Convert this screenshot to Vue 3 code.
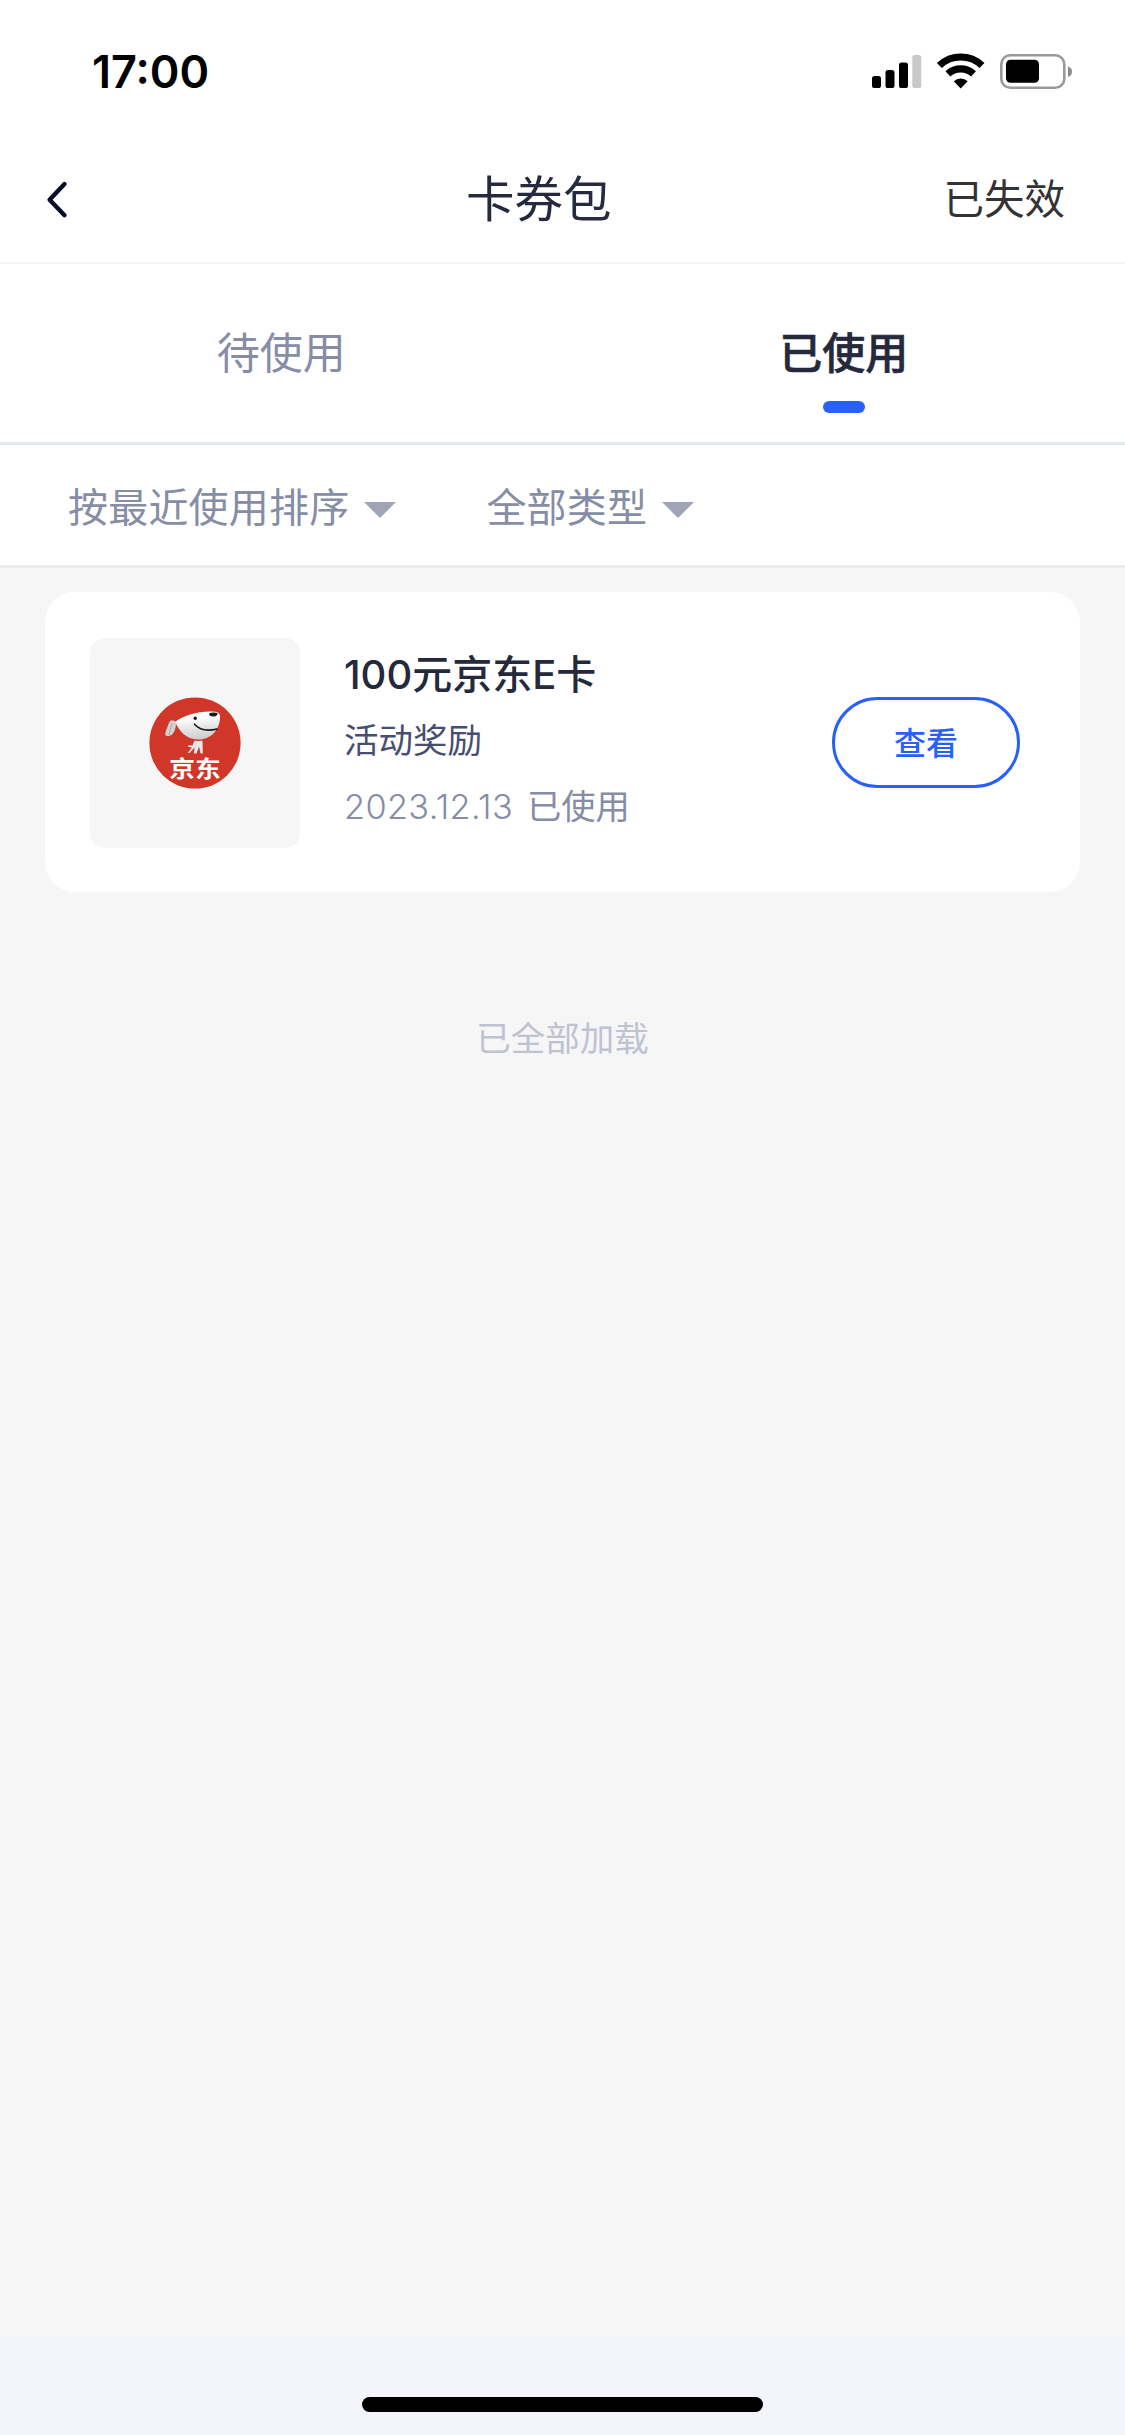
<script setup>
const tabs = [
  { label: '待使用', active: false },
  { label: '已使用', active: true },
]
const filters = ['按最近使用排序', '全部类型']
</script>

<template>
  <div class="page">
    <div class="status">
      <span class="time">17:00</span>
      <svg class="status-icons" width="206" height="40" viewBox="0 0 206 40">
        <rect x="0" y="22" width="9" height="12" rx="2.6" />
        <rect x="13.500" y="16" width="9" height="18" rx="2.600" />
        <rect x="27" y="8.500" width="9" height="25.500" rx="2.600" />
        <rect x="40.300" y="1" width="9" height="33" rx="2.600" fill="#c9c9c9" />
        <g fill="none" stroke="#000" stroke-width="7.200">
          <path d="M67.400 11.500A31 31 0 0 1 110 11.500" />
          <path d="M75.900 19.800A19 19 0 0 1 101.500 19.800" />
        </g>
        <path d="M81.700 27.200a10.500 10.500 0 0 1 14 0L88.700 34.400z" />
        <rect x="129.300" y="1.300" width="63" height="32.400" rx="9" fill="none" stroke="#999" stroke-width="2.600" />
        <rect x="134" y="5.800" width="33" height="23" rx="4.500" />
        <path d="M196 12.300q4 1.500 4 5.400t-4 5.400z" fill="#8c8c8c" />
      </svg>
    </div>

    <header class="nav">
      <svg class="back" width="24" height="40" viewBox="0 0 24 40">
        <path d="M19.500 4L4.600 19.700L19.500 35.200" fill="none" stroke="#0a0b2b" stroke-width="4.400" stroke-linecap="round" stroke-linejoin="round" />
      </svg>
      <h1 class="title">卡券包</h1>
      <span class="expired">已失效</span>
    </header>

    <nav class="tabs">
      <div v-for="t in tabs" :key="t.label" class="tab" :class="{ active: t.active }">
        <span>{{ t.label }}</span>
        <i class="mark"></i>
      </div>
    </nav>

    <div class="filters">
      <div v-for="f in filters" :key="f" class="filter">
        <span>{{ f }}</span>
        <svg width="32" height="16" viewBox="0 0 32 16"><path d="M0 0H32L16 16z" fill="#9fa4b6" /></svg>
      </div>
    </div>

    <main class="list">
      <article class="card">
        <div class="thumb">
          <svg width="92" height="92" viewBox="0 0 92 92">
            <defs>
              <linearGradient id="head" x1="0" y1="0" x2="0.200" y2="1">
                <stop offset="0.350" stop-color="#fafafa" />
                <stop offset="1" stop-color="#cfcfcf" />
              </linearGradient>
            </defs>
            <circle cx="46" cy="46" r="45.600" fill="#d13729" />
            <path d="M27 25.500C24.500 22.500 21.500 22.500 20.200 25.500C18.500 29.500 16.800 33.500 16.200 37C16 39.500 21 39.800 23.300 37.300C26 34 26.800 31 27 25.500z" fill="#d2d2d2" />
            <path d="M23.500 26C21.500 30 20.500 34 20.300 38" fill="none" stroke="#aaa" stroke-width="1" />
            <path d="M26 25C35 18 51 13.500 66 14.800C70.500 15.200 71.500 18 71 22C70 32 63 42.500 49 42.500C37 42.500 30.500 34 26 25z" fill="url(#head)" />
            <path d="M60 16.500q4-1.800 8.500-.4q.3 3-3 3.300q-5.500.3-5.500-2.900z" fill="#191919" />
            <circle cx="46.200" cy="21.300" r="1.700" fill="#191919" />
            <path d="M45.500 27.200C51 33.500 60 34 68 32" fill="none" stroke="#191919" stroke-width="1.600" stroke-linecap="round" />
            <path d="M45.500 43.500C49 44.300 51.500 44 53.500 43.500L53.800 56.500H51.600L50 49.500L47.500 56.500H45L45.600 50.500L40.500 56H38.800L42.800 50.500L38.700 49.600L39.500 48.300L43.500 48.500z" fill="#e8e8e8" />
            <text class="logo-text" transform="translate(20.300 79.600) scale(1 0.860)">京东</text>
          </svg>
        </div>
        <div class="info">
          <div class="name">100元京东E卡</div>
          <div class="source">活动奖励</div>
          <div class="date"><span class="num">2023.12.13</span><span>已使用</span></div>
        </div>
        <button class="view">查看</button>
      </article>
      <p class="end">已全部加载</p>
    </main>

    <footer class="bottom"><div class="home"></div></footer>
  </div>
</template>

<style>
body {
  margin: 0;
}
</style>

<style scoped>
.page {
  width: 1125px;
  height: 2435px;
  display: flex;
  flex-direction: column;
  background: #fff;
  overflow: hidden;
  font-family: Inter, "Noto Sans CJK SC", sans-serif;
}
.status {
  height: 144px;
  flex: none;
  box-sizing: border-box;
  display: flex;
  justify-content: space-between;
  align-items: center;
  padding: 0 47px 0 92px;
}
.time {
  font-size: 45px;
  font-weight: 600;
  line-height: 56px;
  color: #000;
}
.status-icons {
  margin-top: 4px;
  overflow: visible;
}
.nav {
  flex: none;
  height: 120px;
  box-sizing: border-box;
  border-bottom: 2px solid #f4f4f4;
  display: flex;
  align-items: center;
  padding: 0 60px 6px 45px;
}
.back {
  margin-top: -1px;
}
.title {
  margin: 0 0 0 397px;
  font-size: 48.500px;
  line-height: 64px;
  font-weight: 400;
  color: #252a3f;
}
.expired {
  margin-left: auto;
  font-size: 40.500px;
  line-height: 64px;
  color: #333;
}
.tabs {
  flex: none;
  height: 181px;
  box-sizing: border-box;
  border-bottom: 3px solid #e3e7f3;
  display: flex;
}
.tab {
  flex: 1;
  display: flex;
  flex-direction: column;
  align-items: center;
  padding-top: 59px;
  font-size: 43px;
  line-height: 60px;
  color: #868da5;
}
.tab.active {
  color: #25293c;
  font-weight: 500;
  -webkit-text-stroke: 0.600px #25293c;
}
.mark {
  width: 42px;
  height: 12px;
  margin-top: 18px;
  border-radius: 6px;
}
.active .mark {
  background: #2860f8;
}
.filters {
  flex: none;
  height: 123px;
  box-sizing: border-box;
  border-bottom: 3px solid #ebebeb;
  display: flex;
  align-items: center;
  gap: 90px;
  padding: 5px 0 0 68px;
}
.filter {
  display: flex;
  align-items: center;
  gap: 15px;
  font-size: 40px;
  letter-spacing: 0.200px;
  line-height: 60px;
  color: #868da5;
}
.filter svg {
  margin-top: 4px;
}
.list {
  flex: 1;
  background: #f6f6f6;
  padding: 24px 45px 0;
}
.card {
  height: 300px;
  box-sizing: border-box;
  background: #fff;
  border-radius: 30px;
  display: flex;
  align-items: center;
  padding: 1px 60px 0 45px;
}
.thumb {
  width: 210px;
  height: 210px;
  border-radius: 15px;
  background: #f6f6f6;
  display: flex;
  align-items: center;
  justify-content: center;
}
.logo-text {
  font-family: "Noto Sans CJK SC", sans-serif;
  font-size: 25.800px;
  font-weight: 700;
  fill: #fff;
}
.info {
  margin: 0 0 3px 44px;
  display: flex;
  flex-direction: column;
  gap: 6px;
}
.name {
  font-size: 40px;
  font-weight: 500;
  line-height: 60px;
  color: #25293c;
}
.source {
  font-size: 34.500px;
  line-height: 60px;
  color: #474e70;
}
.date {
  font-size: 34.300px;
  line-height: 60px;
  color: #868da5;
  display: flex;
  gap: 12px;
}
.num {
  width: 171px;
  white-space: nowrap;
  font-weight: 350;
  letter-spacing: 0.350px;
}
.view {
  margin-left: auto;
  width: 188px;
  height: 91px;
  box-sizing: border-box;
  border: 3px solid #2860f8;
  border-radius: 46px;
  background: #fff;
  color: #2860f8;
  font: 500 32px/46px Inter, "Noto Sans CJK SC", sans-serif;
  padding: 2px 0 0;
}
.end {
  margin: 117px 0 0;
  text-align: center;
  font-size: 34.500px;
  line-height: 60px;
  color: #bfc2d0;
}
.bottom {
  flex: none;
  height: 99px;
  background: #f4f5fa;
  display: flex;
  justify-content: center;
}
.home {
  width: 401px;
  height: 15px;
  margin-top: 61px;
  border-radius: 8px;
  background: #000;
}
</style>
